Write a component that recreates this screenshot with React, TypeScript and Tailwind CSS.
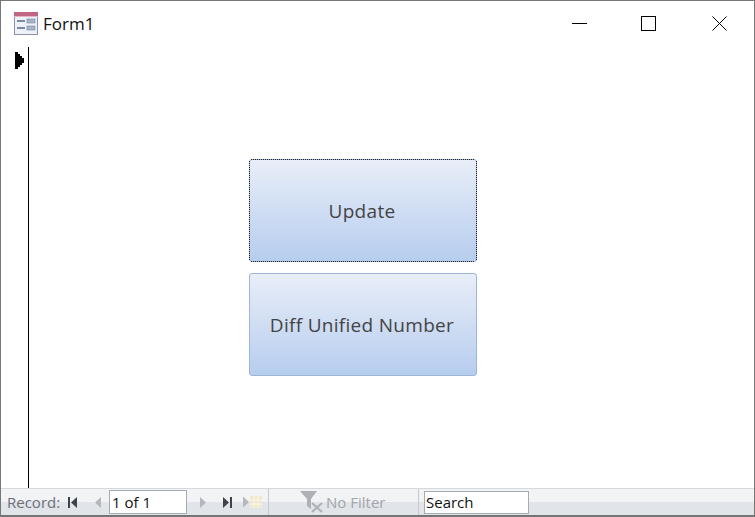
const sans = { fontFamily: '"Open Sans", "Noto Sans", sans-serif' };

function FormIcon() {
  return (
    <svg width="24" height="23" viewBox="0 0 24 23" className="mb-[2px] shrink-0">
      <rect x="0.5" y="0.5" width="23" height="22" fill="#eef1f8" stroke="#8a93ab" />
      <rect x="0" y="0" width="24" height="4" fill="#bf6585" />
      <rect x="0" y="4" width="24" height="1" fill="#e6b4c6" />
      <rect x="3" y="8" width="8" height="2" fill="#7d8aa4" />
      <rect x="3" y="15" width="8" height="2" fill="#7d8aa4" />
      <rect x="13" y="7" width="8" height="4" fill="#a9b4ca" stroke="#75829d" strokeWidth="0.6" />
      <rect x="13" y="14" width="8" height="4" fill="#a9b4ca" stroke="#75829d" strokeWidth="0.6" />
    </svg>
  );
}

function WindowControls() {
  return (
    <div className="ml-auto flex items-center pb-px pr-[27px]">
      <svg width="15" height="15" viewBox="0 0 15 15"><path d="M0 7.5H15" stroke="#000" strokeWidth="1" /></svg>
      <svg width="15" height="15" viewBox="0 0 15 15" className="ml-[54px]"><rect x="0.5" y="0.5" width="14" height="14" fill="none" stroke="#000" /></svg>
      <svg width="15" height="15" viewBox="0 0 15 15" className="ml-[56px]"><path d="M0.5 0.5L14.5 14.5M14.5 0.5L0.5 14.5" stroke="#000" strokeWidth="1" /></svg>
    </div>
  );
}

function Btn({ label, focused }: { label: string; focused?: boolean }) {
  return (
    <div className="relative flex h-[103px] w-[228px] items-center justify-center rounded-[3px] border border-[#9db6d8] bg-gradient-to-b from-[#e9eef8] to-[#b6cdee] pr-[2px] pt-px text-[19px] tracking-[0.3px] text-[#444]" style={sans}>
      {label}
      {focused && (
        <svg width="228" height="103" viewBox="0 0 228 103" className="absolute -left-px -top-px">
          <path d="M2 0.5H226M2 102.5H226M0.5 2V101M227.5 2V101" fill="none" stroke="#222" strokeDasharray="1 1" shapeRendering="crispEdges" />
        </svg>
      )}
    </div>
  );
}

function First() {
  return <svg width="11" height="11" viewBox="0 0 11 11"><path d="M1 0H3V11H1ZM10 0V11L4 5.5Z" fill="#3f444c" /></svg>;
}
function Prev() {
  return <svg width="10" height="11" viewBox="0 0 10 11"><path d="M8 0V11L2 5.5Z" fill="#b4b8bd" /></svg>;
}
function Next() {
  return <svg width="10" height="11" viewBox="0 0 10 11"><path d="M2 0V11L8 5.5Z" fill="#b4b8bd" /></svg>;
}
function Last() {
  return <svg width="11" height="11" viewBox="0 0 11 11"><path d="M1 0V11L7 5.5ZM8 0H10V11H8Z" fill="#3f444c" /></svg>;
}
function NewRec() {
  return (
    <svg width="19" height="12" viewBox="0 0 19 12">
      <path d="M0 0.5V11.5L6 6Z" fill="#b4b8bd" />
      <rect x="7" y="0" width="12" height="12" fill="#f0e8cc" />
      <path d="M11 0V12M15 0V12M7 4H19M7 8H19" stroke="#f9f6ea" strokeWidth="1" />
    </svg>
  );
}
function FilterIcon() {
  return (
    <svg width="24" height="22" viewBox="0 0 24 22">
      <path d="M0 0H17L11 8V18L7 15V8Z" fill="#adb0b4" />
      <path d="M12 12L22 21M22 12L12 21" stroke="#adb0b4" strokeWidth="2" />
    </svg>
  );
}

export default function App() {
  return (
    <div className="flex h-[517px] w-[755px] flex-col overflow-hidden border border-[#777] bg-white" style={sans}>
      <div className="flex h-[46px] shrink-0 items-center pl-[13px]">
        <FormIcon />
        <span className="ml-[5px] text-[17px] text-[#111]">Form1</span>
        <WindowControls />
      </div>
      <div className="flex min-h-0 flex-1">
        <div className="w-[28px] shrink-0 border-r border-black pl-[14px] pt-[5px]">
          <svg width="10" height="17" viewBox="0 0 10 17" className="block"><path d="M0 0H3V2H5V4H7V6H9V11H7V13H5V15H3V17H0Z" fill="#000" /></svg>
        </div>
        <div className="flex flex-1 flex-col gap-[11px] pl-[220px] pt-[112px]">
          <Btn label="Update" focused />
          <Btn label="Diff Unified Number" />
        </div>
      </div>
      <div className="flex h-[28px] shrink-0 items-center border-y border-t-[#d5d8dc] border-b-[#6f7276] bg-gradient-to-b from-[#f2f3f5] from-50% to-[#e1e4e8] to-50% pl-[6px] text-[15px]">
        <span className="w-[60px] text-[#6b7078]">Record:</span>
        <div className="flex w-[26px] justify-start"><First /></div>
        <div className="flex w-[16px] justify-start"><Prev /></div>
        <div className="flex h-[24px] w-[78px] items-center border border-[#a8abb0] bg-white pl-[2px] text-[#111]">1 of 1</div>
        <div className="flex w-[35px] justify-start pl-[11px]"><Next /></div>
        <div className="flex w-[21px] justify-start"><Last /></div>
        <div className="flex w-[25px] justify-start"><NewRec /></div>
        <div className="h-full w-px bg-[#c6c9cd]" />
        <div className="flex h-full w-[149px] items-center gap-[2px] pl-[31px] text-[#a2a5aa]">
          <FilterIcon />
          <span>No Filter</span>
        </div>
        <div className="h-full w-px bg-[#c6c9cd]" />
        <div className="ml-[5px] flex h-[23px] w-[105px] items-center border border-[#a8abb0] bg-white pl-[1px] text-[#111]">Search</div>
      </div>
    </div>
  );
}
